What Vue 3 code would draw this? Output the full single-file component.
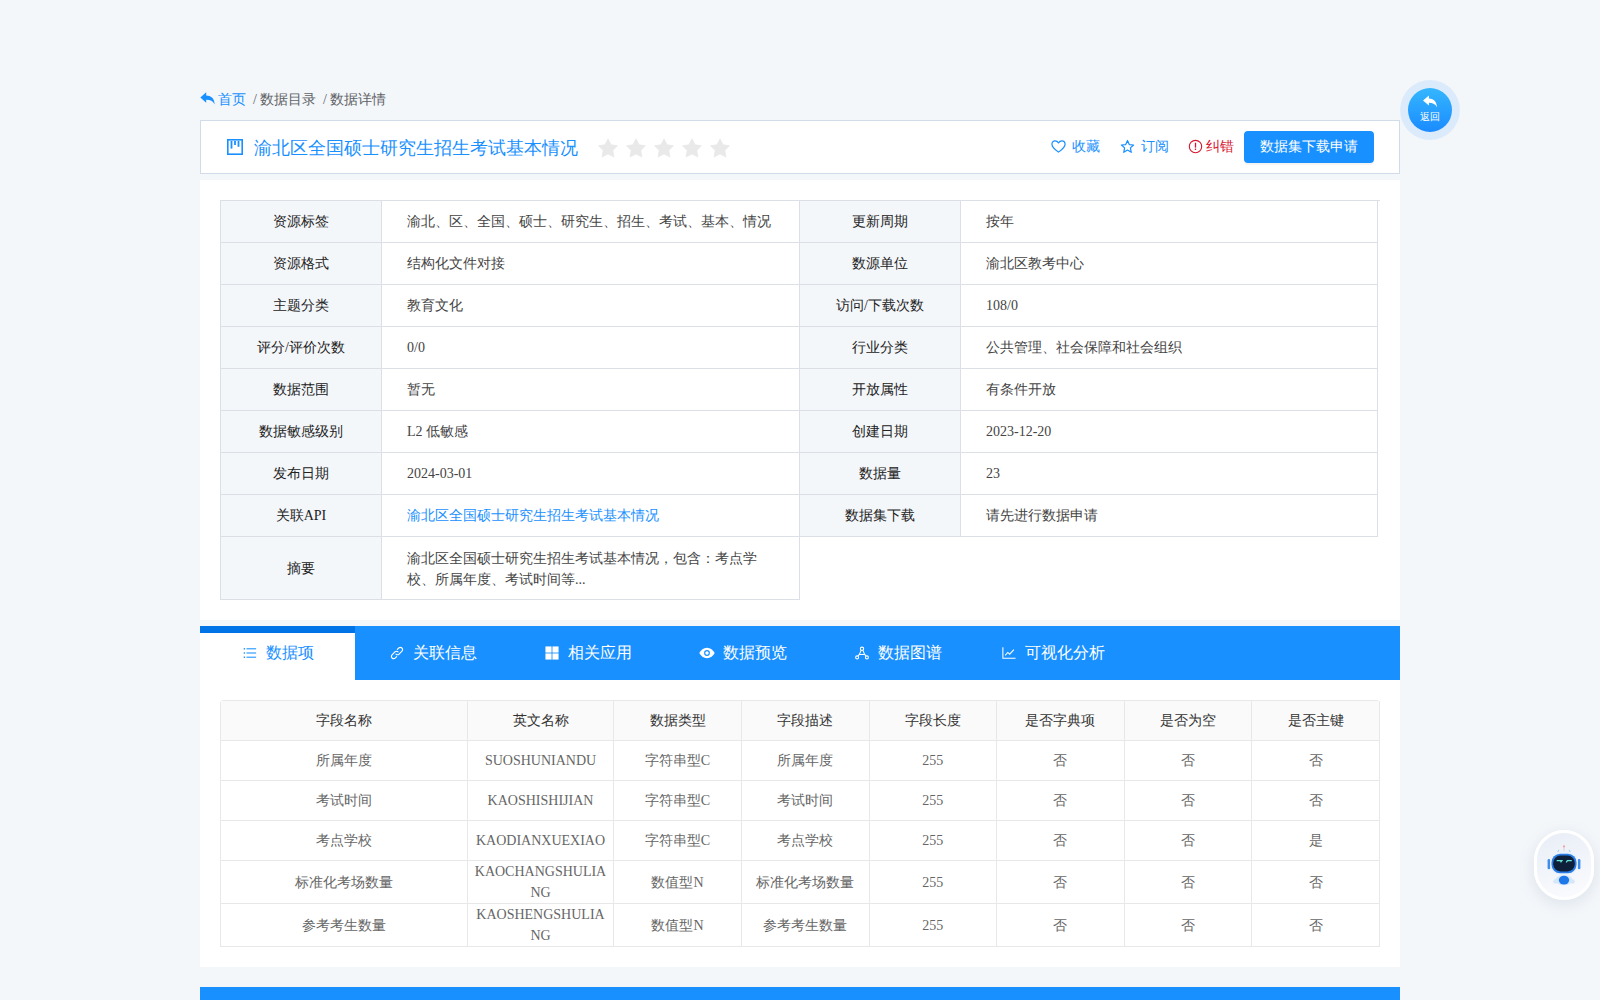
<template>
  <div class="page">
    <div class="container">
      <!-- breadcrumb -->
      <div class="crumb">
        <a class="crumb__home">
          <svg class="crumb__icon" viewBox="0 0 16 14"><path d="M0.3 6 L6.6 0.4 V3.7 C11.5 3.9 15.4 6.2 15.7 13.4 C14 9.9 11.2 8.4 6.6 8.4 V11.6 Z" fill="currentColor" /></svg>
          首页
        </a>
        <span class="crumb__sep">/</span><span>数据目录</span>
        <span class="crumb__sep crumb__sep--wide">/</span><span>数据详情</span>
      </div>

      <!-- title bar -->
      <div class="head">
        <svg class="head__icon" viewBox="0 0 16 16">
          <rect x="0.8" y="0.8" width="14.4" height="14.4" fill="none" stroke="currentColor" stroke-width="1.6" />
          <rect x="3.6" y="2" width="1.8" height="7.6" fill="currentColor" />
          <rect x="7.1" y="2" width="1.8" height="4" fill="currentColor" />
          <rect x="10.6" y="2" width="1.8" height="5.8" fill="currentColor" />
        </svg>
        <h1 class="head__title">渝北区全国硕士研究生招生考试基本情况</h1>
        <div class="head__stars">
          <svg v-for="n in 5" :key="n" class="head__star" viewBox="0 0 20 20">
            <path d="M10 0.8 L13 6.8 L19.4 7.8 L14.8 12.4 L15.9 18.9 L10 15.9 L4.1 18.9 L5.2 12.4 L0.6 7.8 L7 6.8 Z" fill="currentColor" stroke="currentColor" stroke-width="0.8" stroke-linejoin="round" />
          </svg>
        </div>
        <div class="head__actions">
          <a class="act act--fav">
            <svg viewBox="0 0 16 16"><path d="M8 14 C3.5 10.8 1 8.5 1 5.5 C1 3.4 2.6 2 4.4 2 C5.9 2 7.2 2.8 8 4.2 C8.8 2.8 10.1 2 11.6 2 C13.4 2 15 3.4 15 5.5 C15 8.5 12.5 10.8 8 14 Z" fill="none" stroke="currentColor" stroke-width="1.3" stroke-linejoin="round" /></svg>
            <span>收藏</span>
          </a>
          <a class="act act--sub">
            <svg viewBox="0 0 16 16"><path d="M8 1.6 L9.9 5.9 L14.5 6.4 L11.1 9.5 L12 14.2 L8 11.8 L4 14.2 L4.9 9.5 L1.5 6.4 L6.1 5.9 Z" fill="none" stroke="currentColor" stroke-width="1.3" stroke-linejoin="round" /></svg>
            <span>订阅</span>
          </a>
          <a class="act act--err">
            <svg viewBox="0 0 16 16">
              <circle cx="8" cy="8" r="6.6" fill="none" stroke="currentColor" stroke-width="1.2" />
              <rect x="7.3" y="4" width="1.4" height="5.2" fill="currentColor" />
              <rect x="7.3" y="10.2" width="1.4" height="1.5" fill="currentColor" />
            </svg>
            <span>纠错</span>
          </a>
          <button type="button" class="apply">数据集下载申请</button>
        </div>
      </div>

      <!-- base info -->
      <section class="panel panel--info">
        <div class="info">
          <template v-for="row in infoRows" :key="row.label">
            <div class="info__label" :class="{ 'info__label--first': row.first, 'info__cell--tall': row.tall }">{{ row.label }}</div>
            <div class="info__value" :class="{ 'info__value--wrap': row.tall, 'info__cell--tall': row.tall }">
              <a v-if="row.link" class="info__link">{{ row.value }}</a>
              <template v-else>{{ row.value }}</template>
            </div>
          </template>
        </div>
      </section>

      <!-- tabs -->
      <div class="tabs">
        <div v-for="(tab, idx) in tabs" :key="tab.name" class="tab" :class="{ 'is-active': idx === 0 }">
          <svg class="tab__icon" viewBox="0 0 16 16" v-html="tab.icon"></svg>
          <span>{{ tab.name }}</span>
        </div>
      </div>

      <section class="panel panel--fields">
        <table class="fields">
          <colgroup>
            <col v-for="(w, i) in colWidths" :key="i" :style="{ width: w + 'px' }" />
          </colgroup>
          <thead>
            <tr><th v-for="h in fieldHead" :key="h">{{ h }}</th></tr>
          </thead>
          <tbody>
            <tr v-for="row in fieldRows" :key="row[1]">
              <td v-for="(cell, i) in row" :key="i">{{ cell }}</td>
            </tr>
          </tbody>
        </table>
      </section>

      <div class="next-bar"></div>
    </div>

    <!-- floating buttons -->
    <a class="back">
      <span class="back__inner">
        <svg viewBox="0 0 16 14"><path d="M0.5 6 L6.8 0.6 V3.8 C11.5 4 15 6.4 15.6 13.4 C14 10 11.2 8.4 6.8 8.4 V11.4 Z" fill="#fff" /></svg>
        <span>返回</span>
      </span>
    </a>

    <div class="robot">
      <svg viewBox="0 0 44 48" class="robot__svg">
        <line x1="22" y1="3" x2="22" y2="8" stroke="#d9c7cf" stroke-width="1" />
        <circle cx="22" cy="2.4" r="1.3" fill="#f0a59a" />
        <path d="M14 11 L16 6.5 M30 11 L28 6.5" stroke="#8cbcf0" stroke-width="1" />
        <rect x="3" y="17" width="3" height="12" rx="1.5" fill="#3f8cec" />
        <rect x="38" y="17" width="3" height="12" rx="1.5" fill="#3f8cec" />
        <rect x="6" y="8.5" width="32" height="27" rx="12" fill="#e8f1fc" />
        <rect x="7.5" y="11" width="29" height="22.5" rx="10" fill="#2b7de6" />
        <rect x="9.5" y="13" width="25" height="18.5" rx="8.5" fill="#0e1f3a" />
        <path d="M13.5 19 H19.5 L18 21 M24.5 21 L26 19 H31" fill="none" stroke="#5fe6d8" stroke-width="1.5" />
        <ellipse cx="22" cy="41.5" rx="10" ry="6" fill="#d6e7fa" />
        <circle cx="12" cy="43" r="2.6" fill="#d6e7fa" />
        <circle cx="32" cy="43" r="2.6" fill="#d6e7fa" />
        <ellipse cx="22" cy="41.5" rx="6" ry="5" fill="#1f78ea" />
      </svg>
    </div>
  </div>
</template>

<script setup>
const infoRows = [
  { label: '资源标签', value: '渝北、区、全国、硕士、研究生、招生、考试、基本、情况', first: true },
  { label: '更新周期', value: '按年' },
  { label: '资源格式', value: '结构化文件对接', first: true },
  { label: '数源单位', value: '渝北区教考中心' },
  { label: '主题分类', value: '教育文化', first: true },
  { label: '访问/下载次数', value: '108/0' },
  { label: '评分/评价次数', value: '0/0', first: true },
  { label: '行业分类', value: '公共管理、社会保障和社会组织' },
  { label: '数据范围', value: '暂无', first: true },
  { label: '开放属性', value: '有条件开放' },
  { label: '数据敏感级别', value: 'L2 低敏感', first: true },
  { label: '创建日期', value: '2023-12-20' },
  { label: '发布日期', value: '2024-03-01', first: true },
  { label: '数据量', value: '23' },
  { label: '关联API', value: '渝北区全国硕士研究生招生考试基本情况', first: true, link: true },
  { label: '数据集下载', value: '请先进行数据申请' },
  { label: '摘要', value: '渝北区全国硕士研究生招生考试基本情况，包含：考点学校、所属年度、考试时间等...', first: true, tall: true },
]

const tabs = [
  {
    name: '数据项',
    icon: '<g fill="currentColor"><rect x="4" y="2.6" width="11" height="1.2"/><rect x="4" y="7.4" width="11" height="1.2"/><rect x="4" y="12.2" width="11" height="1.2"/><rect x="0.8" y="2.4" width="1.6" height="1.6"/><rect x="0.8" y="7.2" width="1.6" height="1.6"/><rect x="0.8" y="12" width="1.6" height="1.6"/></g>',
  },
  {
    name: '关联信息',
    icon: '<g fill="none" stroke="currentColor" stroke-width="1.3" stroke-linecap="round"><path d="M6.8 9.2 C8 10.4 9.4 10.2 10.4 9.2 L13.4 6.2 C14.8 4.8 14.6 3.2 13.6 2.3 C12.6 1.4 11 1.3 9.8 2.5 L8.4 3.9"/><path d="M9.2 6.8 C8 5.6 6.6 5.8 5.6 6.8 L2.6 9.8 C1.2 11.2 1.4 12.8 2.4 13.7 C3.4 14.6 5 14.7 6.2 13.5 L7.6 12.1"/></g>',
  },
  {
    name: '相关应用',
    icon: '<g fill="currentColor"><rect x="0.5" y="0.5" width="7" height="7"/><rect x="8.5" y="0.5" width="7" height="7"/><rect x="0.5" y="8.5" width="7" height="7"/><rect x="8.5" y="8.5" width="7" height="7"/></g>',
  },
  {
    name: '数据预览',
    icon: '<g transform="translate(8 8) scale(1.1) translate(-8 -8)"><path fill="currentColor" fill-rule="evenodd" d="M8 2.6 C11.6 2.6 14.4 5 16 8 C14.4 11 11.6 13.4 8 13.4 C4.4 13.4 1.6 11 0 8 C1.6 5 4.4 2.6 8 2.6 Z M8 5 A3 3 0 1 0 8 11 A3 3 0 1 0 8 5 Z"/><circle cx="8" cy="8" r="1.8" fill="currentColor"/></g>',
  },
  {
    name: '数据图谱',
    icon: '<g fill="none" stroke="currentColor" stroke-width="1.2"><circle cx="8" cy="3.2" r="1.9"/><circle cx="2.4" cy="13" r="1.7"/><circle cx="13.6" cy="13" r="1.7"/><path d="M7 5 L5 9.6 H11 L9 5 M5 9.6 L3.3 11.6 M11 9.6 L12.7 11.6"/></g>',
  },
  {
    name: '可视化分析',
    icon: '<g fill="none" stroke="currentColor" stroke-width="1.2"><path d="M1 1.5 V14 H15.5"/><path d="M3.6 10.6 L6.6 7.4 L8.8 9.4 L13.6 4.2"/></g>',
  },
]

const colWidths = [247, 146, 128, 127.5, 127.5, 127.5, 127.5, 128]
const fieldHead = ['字段名称', '英文名称', '数据类型', '字段描述', '字段长度', '是否字典项', '是否为空', '是否主键']
const fieldRows = [
  ['所属年度', 'SUOSHUNIANDU', '字符串型C', '所属年度', '255', '否', '否', '否'],
  ['考试时间', 'KAOSHISHIJIAN', '字符串型C', '考试时间', '255', '否', '否', '否'],
  ['考点学校', 'KAODIANXUEXIAO', '字符串型C', '考点学校', '255', '否', '否', '是'],
  ['标准化考场数量', 'KAOCHANGSHULIANG', '数值型N', '标准化考场数量', '255', '否', '否', '否'],
  ['参考考生数量', 'KAOSHENGSHULIANG', '数值型N', '参考考生数量', '255', '否', '否', '否'],
]
</script>

<style scoped>
.page {
  height: 1000px;
  overflow: hidden;
  background: #f4f7fa;
  font-family: "Liberation Serif", serif;
  font-size: 14px;
  color: #333;
}

.container {
  width: 1200px;
  margin: 0 auto;
  padding-top: 90px;
}

.crumb {
  display: flex;
  align-items: center;
  height: 20px;
  margin-bottom: 10px;
  color: #606266;
}

.crumb__home {
  display: inline-flex;
  align-items: center;
  gap: 3px;
  color: #1890ff;
}

.crumb__icon {
  width: 15px;
  height: 13px;
  margin-top: -3px;
}

.crumb__sep {
  margin: 0 3px 0 7px;
}

.crumb__sep--wide {
  margin-left: 7px;
}

.head {
  display: flex;
  align-items: center;
  height: 54px;
  box-sizing: border-box;
  padding: 0 25px 0 26px;
  background: #fff;
  border: 1px solid #d0dcea;
}

.head__icon {
  width: 16px;
  height: 16px;
  color: #1890ff;
  margin-right: 11px;
}

.head__title {
  margin: 2px 0 0;
  font-size: 18px;
  font-weight: 400;
  color: #1890ff;
}

.head__stars {
  display: flex;
  gap: 8px;
  margin: 2px 0 0 20px;
}

.head__star {
  width: 20px;
  height: 20px;
  color: #e9e9e9;
}

.head__actions {
  display: flex;
  align-items: center;
  margin-left: auto;
}

.act {
  display: inline-flex;
  align-items: center;
  color: #1890ff;
}

.act svg {
  width: 15px;
  height: 15px;
  margin: -2px 6px 0 0;
}

.act--fav {
  margin-right: 20px;
}

.act--sub {
  margin-right: 19px;
}

.act--err {
  color: #d9142f;
  margin-right: 10px;
}

.act--err svg {
  margin-right: 3px;
}

.apply {
  width: 130px;
  height: 32px;
  padding: 0;
  border: none;
  border-radius: 4px;
  background: #1890ff;
  color: #fff;
  font: inherit;
  box-shadow: 0 2px 0 rgba(0, 0, 0, 0.045);
}

.panel {
  background: #fff;
  padding: 20px;
}

.panel--info {
  margin-top: 6px;
}

.info {
  display: grid;
  grid-template-columns: 162px 418px 161px 417px;
  grid-template-rows: repeat(8, 42px) 63px;
  width: 1160px;
  border-top: 1px solid #dcdfe6;
  box-sizing: border-box;
}

.info__label,
.info__value {
  display: flex;
  align-items: center;
  box-sizing: border-box;
  border-right: 1px solid #dcdfe6;
  border-bottom: 1px solid #dcdfe6;
}

.info__label {
  justify-content: center;
  background: #f4f7fa;
  color: #222;
}

.info__label--first {
  border-left: 1px solid #dcdfe6;
}

.info__value {
  padding: 0 25px;
  color: #444;
}

.info__value--wrap {
  line-height: 21px;
  word-break: break-all;
}

.info__cell--tall {
  padding-top: 1px;
}

.info__link {
  color: #1890ff;
}

.tabs {
  display: flex;
  height: 54px;
  margin-top: 6px;
  background: #1890ff;
  color: #fff;
  font-size: 16px;
}

.tab {
  display: flex;
  align-items: center;
  justify-content: center;
  gap: 9px;
  width: 155px;
}

.tab__icon {
  width: 14px;
  height: 14px;
  margin-left: 1px;
  overflow: visible;
}

.tab.is-active {
  background: #fff;
  color: #1890ff;
  box-shadow: inset 0 7px 0 #0073e6;
}

.panel--fields {
  padding-bottom: 20px;
}

.fields {
  width: 1159px;
  table-layout: fixed;
  border-collapse: separate;
  border-spacing: 0;
  border-left: 1px solid #e8e8e8;
  border-top: 1px solid #e8e8e8;
  border-top-left-radius: 4px;
  border-top-right-radius: 4px;
}

.fields th,
.fields td {
  box-sizing: border-box;
  padding: 0 4px;
  height: 40px;
  line-height: 21px;
  text-align: center;
  word-break: break-all;
  border-right: 1px solid #e8e8e8;
  border-bottom: 1px solid #e8e8e8;
}

.fields th {
  font-weight: 400;
  background: #fafafa;
  color: #333;
}

.fields td {
  color: #666;
}

.next-bar {
  height: 54px;
  margin-top: 20px;
  background: #1890ff;
}

.back {
  position: fixed;
  left: 1400px;
  top: 80px;
  display: flex;
  align-items: center;
  justify-content: center;
  width: 60px;
  height: 60px;
  border-radius: 50%;
  background: #dcebfb;
}

.back__inner {
  display: flex;
  flex-direction: column;
  align-items: center;
  justify-content: center;
  box-sizing: border-box;
  width: 44px;
  height: 44px;
  padding-bottom: 2px;
  border-radius: 50%;
  background: linear-gradient(180deg, #35b6ff, #1a8bff);
  color: #fff;
  font-size: 10px;
  line-height: 12px;
}

.back__inner svg {
  width: 16px;
  height: 13px;
  margin-bottom: 3px;
}

.robot {
  position: fixed;
  left: 1534px;
  top: 830px;
  display: flex;
  align-items: center;
  justify-content: center;
  width: 60px;
  height: 70px;
  border-radius: 30px;
  background: linear-gradient(160deg, #e8edf6, #fbfcfe);
  border: 3px solid #fff;
  box-sizing: border-box;
  box-shadow: 0 4px 16px rgba(80, 110, 150, 0.15);
}

.robot__svg {
  width: 38px;
  height: 42px;
}
</style>

<style>
html,
body {
  overflow: hidden;
}
</style>
